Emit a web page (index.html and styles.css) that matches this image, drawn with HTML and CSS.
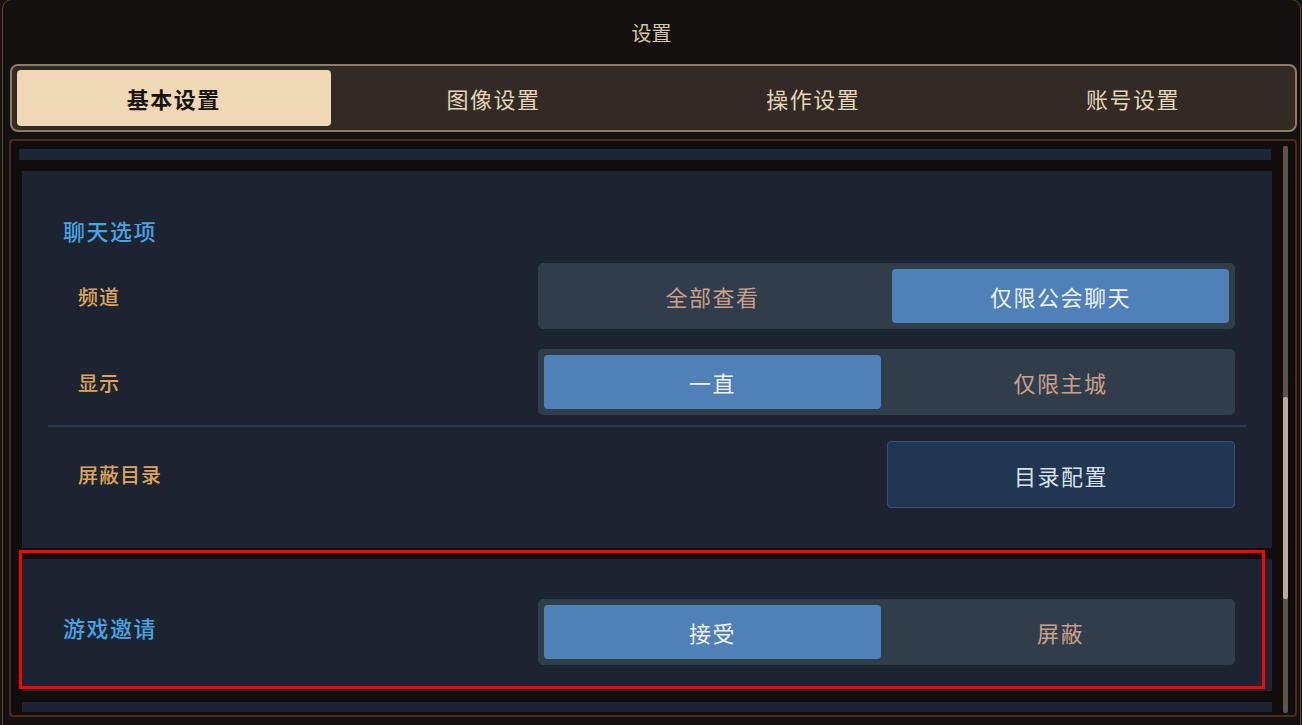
FILE: index.html
```html
<!DOCTYPE html>
<html lang="zh-CN">
<head>
    <meta charset="UTF-8">
    <meta name="viewport" content="width=device-width, initial-scale=1.0">
    <title>设置</title>
    <link rel="stylesheet" href="styles.css">
</head>
<body>
    <div class="frame">
        <div class="title">设置</div>

        <div class="tabs">
            <div class="tab active">基本设置</div>
            <div class="tab">图像设置</div>
            <div class="tab">操作设置</div>
            <div class="tab">账号设置</div>
        </div>

        <div class="panel">
            <div class="list">
                <div class="strip"></div>

                <div class="section">
                    <div class="heading">聊天选项</div>
                    <div class="row">
                        <span class="label">频道</span>
                        <div class="toggle">
                            <div class="seg">全部查看</div>
                            <div class="seg on">仅限公会聊天</div>
                        </div>
                    </div>
                    <div class="row">
                        <span class="label">显示</span>
                        <div class="toggle">
                            <div class="seg on">一直</div>
                            <div class="seg">仅限主城</div>
                        </div>
                    </div>
                    <div class="divider"></div>
                    <div class="row">
                        <span class="label">屏蔽目录</span>
                        <button type="button" class="btn">目录配置</button>
                    </div>
                </div>

                <div class="section invite">
                    <div class="row">
                        <span class="heading">游戏邀请</span>
                        <div class="toggle">
                            <div class="seg on">接受</div>
                            <div class="seg">屏蔽</div>
                        </div>
                    </div>
                    <div class="highlight"></div>
                </div>

                <div class="section tail"></div>
            </div>

            <div class="scrollbar">
                <div class="thumb"></div>
            </div>
        </div>
    </div>
</body>
</html>
```

FILE: styles.css
```css
:root {
    --frame: #151110;
    --gold: #5e4a24;
    --tan: #8d7b65;
    --cream: #efd8b6;
    --navy: #1c2431;
    --blue: #47a3e3;
    --orange: #dfa45c;
    --seg-bg: #323d4b;
    --seg-on: #5080b8;
}

* {
    margin: 0;
    padding: 0;
    box-sizing: border-box;
    font-family: "Noto Sans CJK SC", "Noto Sans", sans-serif;
}

body {
    background: var(--frame);
    width: 1302px;
    height: 725px;
    overflow: hidden;
}

.frame {
    margin: -1px 1px 0 2px;
    height: 740px;
    border: 1px solid var(--gold);
    border-radius: 10px 10px 0 0;
    background: var(--frame);
}

.title {
    height: 64px;
    display: flex;
    align-items: center;
    justify-content: center;
    font-size: 20px;
    color: #d7c7a5;
}

/* Tabs */
.tabs {
    margin: 0 3px 0 7px;
    height: 68px;
    border: 2px solid var(--tan);
    border-radius: 8px;
    background: #322a23;
    padding: 4px 5px;
    display: grid;
    grid-template-columns: repeat(4, 1fr);
    gap: 6px;
}

.tab {
    display: flex;
    align-items: center;
    justify-content: center;
    font-size: 22px;
    letter-spacing: 1.5px;
    color: #e6d5bb;
    border-radius: 4px;
}

.tab.active {
    background: var(--cream);
    color: #1a140f;
    font-weight: 700;
}

/* Panel */
.panel {
    margin: 7px 3px 0 6px;
    height: 578px;
    border: 2px solid #4a281d;
    border-radius: 4px;
    background: #110d0c;
    display: flex;
}

.list {
    width: 1253px;
    margin: 8px 0 3px 8px;
    overflow: hidden;
    display: flex;
    flex-direction: column;
    gap: 11px;
}

.strip {
    width: 1252px;
    height: 11px;
    flex-shrink: 0;
    background: #1c2634;
}

.section {
    margin-left: 3px;
    width: 1250px;
    flex-shrink: 0;
    background: var(--navy);
    padding: 45px 25px 40px 26px;
    position: relative;
}

.heading {
    margin-left: 15px;
    font-size: 22px;
    line-height: 28px;
    letter-spacing: 1.5px;
    font-weight: 500;
    color: var(--blue);
    margin-bottom: 19px;
}

.row {
    display: flex;
    align-items: center;
    justify-content: space-between;
    padding: 0 12px 0 30px;
}

.row + .row {
    margin-top: 20px;
}

.label {
    font-size: 20px;
    letter-spacing: 1px;
    font-weight: 500;
    color: var(--orange);
}

.toggle {
    width: 697px;
    height: 66px;
    padding: 6px;
    background: var(--seg-bg);
    border-radius: 5px;
    display: grid;
    grid-template-columns: 1fr 1fr;
    gap: 11px;
}

.seg {
    display: flex;
    align-items: center;
    justify-content: center;
    font-size: 22px;
    letter-spacing: 1.5px;
    color: #c9a08c;
    border-radius: 4px;
}

.seg.on {
    background: var(--seg-on);
    color: #edf2f8;
}

.divider {
    height: 2px;
    background: #283a50;
    margin: 10px 0 14px;
}

.btn {
    width: 348px;
    height: 67px;
    background: #223552;
    border: 1px solid #37517a;
    border-radius: 4px;
    font-size: 22px;
    letter-spacing: 1.5px;
    color: #d6e2ee;
}

/* Game invite */
.invite {
    height: 132px;
    padding: 40px 25px 0 26px;
}

.invite .row {
    padding-left: 15px;
}

.invite .heading {
    margin: 0 0 10px 0;
}

.highlight {
    position: absolute;
    left: -3px;
    top: -9px;
    right: 7px;
    bottom: 2px;
    border: 3px solid #ff0000;
    pointer-events: none;
}

.tail {
    height: 100px;
    padding: 0;
}

/* Scrollbar */
.scrollbar {
    width: 5px;
    margin: 5px 6px 2px 11px;
    background: #5c554d;
    border-radius: 2px;
    padding-top: 251px;
}

.thumb {
    height: 202px;
    background: #bcae9c;
    border-radius: 2px;
}
```
